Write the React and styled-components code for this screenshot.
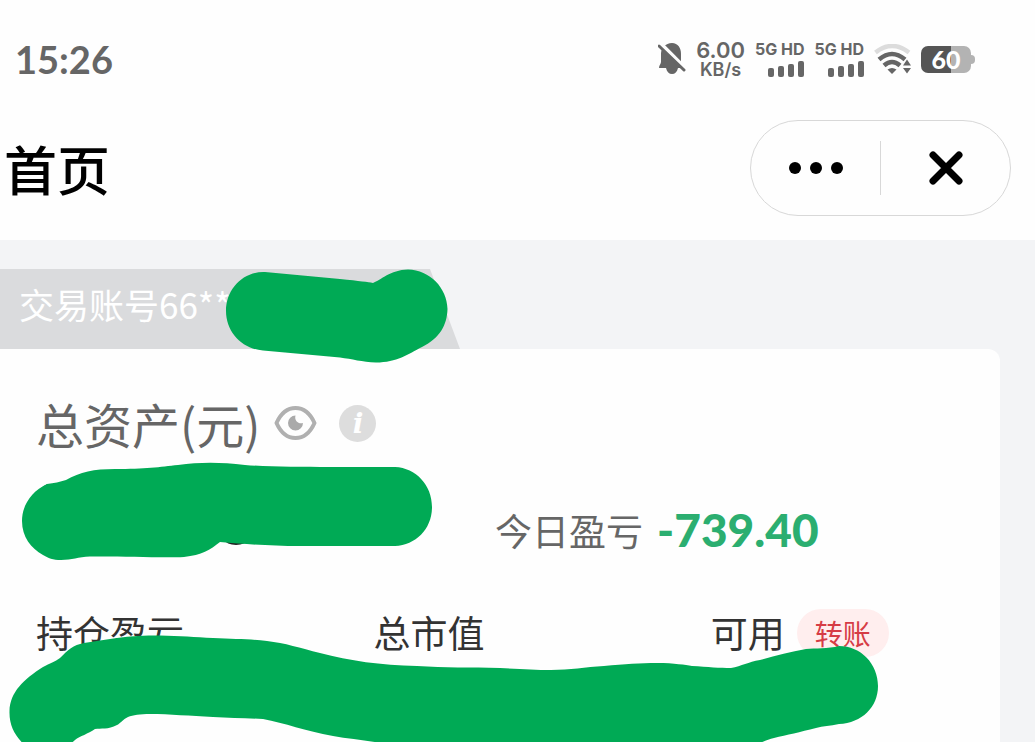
import React from 'react';
import styled, { createGlobalStyle } from 'styled-components';

const GlobalStyle = createGlobalStyle`
  * {
    box-sizing: border-box;
  }
  body {
    margin: 0;
    background: #fefefe;
    font-family: "Noto Sans CJK SC", sans-serif;
  }
  button {
    border: 0;
    padding: 0;
    background: none;
    font: inherit;
    color: inherit;
    cursor: pointer;
  }
  svg {
    display: block;
  }
`;

const Page = styled.div`
  min-height: 100vh;
  display: flex;
  flex-direction: column;
  overflow: hidden;
`;

const StatusBar = styled.div`
  height: 120px;
  padding: 0 60px 2px 15px;
  display: flex;
  align-items: center;
  justify-content: space-between;
  color: #666;
`;

const Clock = styled.time`
  font: 700 38px/48px Lato, sans-serif;
`;

const StatusIcons = styled.div`
  display: flex;
  align-items: center;
  gap: 10px;
`;

const NetSpeed = styled.div`
  display: flex;
  flex-direction: column;
  align-items: center;
  font: 600 18px/18px Inter, sans-serif;
`;

const Speed = styled.span`
  font-size: 22px;
  line-height: 22px;
`;

const Sim = styled.div`
  display: flex;
  flex-direction: column;
  align-items: flex-end;
  gap: 3px;
  font: 700 16px/16px Inter, sans-serif;
`;

const Battery = styled.div`
  display: flex;
  align-items: center;
`;

const BatteryBody = styled.div`
  width: 50px;
  height: 27px;
  border-radius: 7px;
  background: linear-gradient(to right, #555 60%, #b3b3b3 60%);
  color: #fff;
  text-align: center;
  font: 900 25px/27px Lato, sans-serif;
`;

const BatteryTip = styled.div`
  width: 4px;
  height: 9px;
  border-radius: 0 4px 4px 0;
  background: #b3b3b3;
`;

const Header = styled.header`
  padding: 0 24px 24px 4px;
  display: flex;
  align-items: center;
  justify-content: space-between;
`;

const Title = styled.h1`
  margin: 0;
  font-size: 53px;
  font-weight: 500;
  line-height: 72px;
  color: #000;
`;

const Capsule = styled.div`
  width: 261px;
  height: 96px;
  display: flex;
  align-items: center;
  border: 1px solid #d8d8d8;
  border-radius: 48px;
`;

const CapsuleButton = styled.button`
  flex: 1;
  height: 54px;
  display: flex;
  align-items: center;
  justify-content: center;

  & + & {
    border-left: 1px solid #d8d8d8;
  }
`;

const Main = styled.main`
  flex: 1;
  padding: 29px 35px 0 0;
  display: flex;
  flex-direction: column;
  background: #f3f4f6;
`;

const AccountRow = styled.div`
  position: relative;
  z-index: 1;
`;

const AccountTab = styled.div`
  width: 460px;
  height: 80px;
  padding: 0 19px;
  background: #dadbdd;
  clip-path: polygon(0 0, 430px 0, 100% 100%, 0 100%);
  color: #fff;
  font-size: 35px;
  line-height: 70px;
`;

const Card = styled.section`
  position: relative;
  flex: 1;
  padding: 46px 0 36px 36px;
  display: flex;
  flex-direction: column;
  gap: 49px;
  overflow: hidden;
  border-radius: 0 12px 0 0;
  background: #fefefe;
`;

const AssetTitle = styled.div`
  display: flex;
  align-items: center;
  gap: 14px;
`;

const AssetName = styled.h2`
  margin: 0;
  font-size: 48px;
  font-weight: 400;
  line-height: 56px;
  color: #666;
`;

const AssetActions = styled.div`
  display: flex;
  align-items: center;
  gap: 22px;
`;

const InfoButton = styled.button`
  width: 37px;
  height: 37px;
  border-radius: 50%;
  background: #ddd;
  color: #fff;
  font: italic 700 28px/35px "DejaVu Serif", serif;
`;

const TodayRow = styled.div`
  display: grid;
  grid-template-columns: 10fr 11fr;
`;

const Today = styled.div`
  grid-column: 2;
  display: flex;
  align-items: center;
  gap: 14px;
  line-height: 60px;
`;

const TodayLabel = styled.span`
  font-size: 37px;
  color: #666;
`;

const TodayValue = styled.strong`
  font-family: Lato, sans-serif;
  font-size: 46px;
  font-weight: 900;
  color: #2bae70;
`;

const Columns = styled.div`
  display: grid;
  grid-template-columns: 35% 35% 1fr;
`;

const Column = styled.div`
  display: flex;
  align-items: flex-start;
  gap: 12px;
  font-size: 37px;
  line-height: 46px;
  color: #333;
`;

const TransferButton = styled.button`
  width: 92px;
  height: 48px;
  border-radius: 24px;
  background: #ffeeee;
  color: #d63c45;
  font-size: 28px;
  line-height: 44px;
`;

// marker strokes painted over the private numbers
const Marker = styled.svg`
  position: absolute;
  top: 0;
  left: 0;
  overflow: visible;
  pointer-events: none;
  fill: #00aa55;
`;

function MutedBell() {
  return (
    <svg width="28" height="32" viewBox="0 0 28 32" fill="#666">
      <path d="M14 0C7.500 0 3 5 3 11v8c0 2-2 3-2 6h7c1 4 3 6 6 6s5-2 6-6h5c0-3-2-4-2-6v-8C23 5 20 0 14 0z" />
      <path d="M3 1L29 27" stroke="#fefefe" strokeWidth="4" />
      <path d="M1 3L26 27" stroke="#666" strokeWidth="3" strokeLinecap="round" />
    </svg>
  );
}

function Bars() {
  return (
    <svg width="36" height="17" viewBox="0 0 36 17" fill="#666">
      <rect x="0" y="8" width="6" height="9" rx="2" />
      <rect x="10" y="6" width="6" height="11" rx="2" />
      <rect x="20" y="4" width="6" height="13" rx="2" />
      <rect x="30" y="1" width="6" height="16" rx="2" />
    </svg>
  );
}

function Wifi() {
  return (
    <svg width="37" height="30" viewBox="0 0 37 30" fill="none">
      <path d="M1.500 8.500Q18 -4.500 35 8.500" stroke="#dcdcdc" strokeWidth="4.500" />
      <path d="M5 15.500Q18 4.500 31 15.500" stroke="#666" strokeWidth="4.500" />
      <path d="M10 21.500Q18 14.500 26 21.500" stroke="#666" strokeWidth="4.500" />
      <path d="M13.500 25.500q4.500-3 9 0L18 30z" fill="#666" />
      <path d="M29 21.500l4-6 4 6zM29 24h8l-4 5.500z" fill="#666" />
    </svg>
  );
}

function Eye() {
  return (
    <svg width="43" height="36" viewBox="0 0 43 36">
      <path d="M2.500 18C7 8 13 3 21.500 3S36 8 40.500 18C36 28 30 33 21.500 33S7 28 2.500 18z" fill="none" stroke="#b0b0b0" strokeWidth="4" strokeLinejoin="round" />
      <path d="M21.500 10.500a7.500 7.500 0 1 0 7.500 7.500c-4 1.500-9-2-7.500-7.500z" fill="#aaa" />
    </svg>
  );
}

function SimStatus() {
  return (
    <Sim>
      <span>5G HD</span>
      <Bars />
    </Sim>
  );
}

export default function App() {
  return (
    <>
      <GlobalStyle />
      <Page>
        <StatusBar>
          <Clock>15:26</Clock>
          <StatusIcons>
            <MutedBell />
            <NetSpeed>
              <Speed>6.00</Speed>
              <span>KB/s</span>
            </NetSpeed>
            <SimStatus />
            <SimStatus />
            <Wifi />
            <Battery>
              <BatteryBody>60</BatteryBody>
              <BatteryTip />
            </Battery>
          </StatusIcons>
        </StatusBar>

        <Header>
          <Title>首页</Title>
          <Capsule>
            <CapsuleButton aria-label="更多">
              <svg width="54" height="12" viewBox="0 0 54 12">
                <circle cx="6" cy="6" r="6" />
                <circle cx="27" cy="6" r="6" />
                <circle cx="48" cy="6" r="6" />
              </svg>
            </CapsuleButton>
            <CapsuleButton aria-label="关闭">
              <svg width="34" height="34" viewBox="0 0 34 34">
                <path d="M4 4L30 30M30 4L4 30" stroke="#000" strokeWidth="7" strokeLinecap="round" />
              </svg>
            </CapsuleButton>
          </Capsule>
        </Header>

        <Main>
          <AccountRow>
            <AccountTab>交易账号66**</AccountTab>
            <Marker width="460" height="94" viewBox="0 269 460 94">
              <path d="M265 272L340 279C360 281 368 282 373 283C381 280 390 270 408 269.500C430 270 447 288 447.500 309C447 325 440 338 422 347C408 354 397 362.500 376 362.500C362 362 352 359 340 357.500L263 350.500C242 349 226 332 226 311C226 289 243 271 265 272Z" />
            </Marker>
          </AccountRow>

          <Card>
            <AssetTitle>
              <AssetName>总资产(元)</AssetName>
              <AssetActions>
                <button aria-label="显示或隐藏">
                  <Eye />
                </button>
                <InfoButton aria-label="说明">i</InfoButton>
              </AssetActions>
            </AssetTitle>

            <TodayRow>
              <Today>
                <TodayLabel>今日盈亏</TodayLabel>
                <TodayValue>-739.40</TodayValue>
              </Today>
            </TodayRow>

            <Columns>
              <Column>持仓盈亏</Column>
              <Column>总市值</Column>
              <Column>
                可用
                <TransferButton>转账</TransferButton>
              </Column>
            </Columns>

            <Marker width="1000" height="393" viewBox="0 349 1000 393">
              <ellipse cx="50" cy="488" rx="7" ry="4" fill="#222" />
              <ellipse cx="236" cy="540" rx="11" ry="5" fill="#222" />
              <path d="M47 484C54 483 60 482 66 480C80 472 94 469 115 469C145 469 160 467 178 465C200 462 220 462 245 465C270 467 300 467 330 467H395C416 468 432 485 432 507C432 529 416 545 395 546H300C270 546 245 544 220 542C210 550 202 555 184 557C160 558 120 556 90 556.500C78 557 72 560 61 560C53 560 48 558 43 555C31 548 22 537 22 521C22 505 32 491 47 484Z" />
              <path d="M9.500 711C10 692 24 679 43 667C50 663 55 662 60 658C68 650 73 645 84 643C95 641 105 640 117 638C130 636 145 635.500 160 635.500C180 636 195 637 213 638C235 639 250 639 267 641C285 643 300 648 320 653C350 661 380 665 417 666C445 668 470 667 500 668C520 669 535 670 551 670C570 670 585 667 604 666C625 664 640 663 657 663C675 663 685 665 692 666C708 667 720 668 731 668C742 666 748 662 760 660C775 656 790 652 806 649C815 648 828 649 839 646C861 646 878 664 878 686C878 707 862 723 839 724C830 726 823 726 816 728C800 732 787 735 774 738C766 740 760 743 750 748L400 748C380 741 355 740 333 736C305 731 285 723 263 719C245 718 230 718 213 717C190 716 170 714 150 714C140 714 133 715 128 717C123 719 120 724 117 725C108 730 101 728 95 729C88 734 80 736 75 740L66 748H28C16 738 9 727 9.500 711Z" />
            </Marker>
          </Card>
        </Main>
      </Page>
    </>
  );
}
